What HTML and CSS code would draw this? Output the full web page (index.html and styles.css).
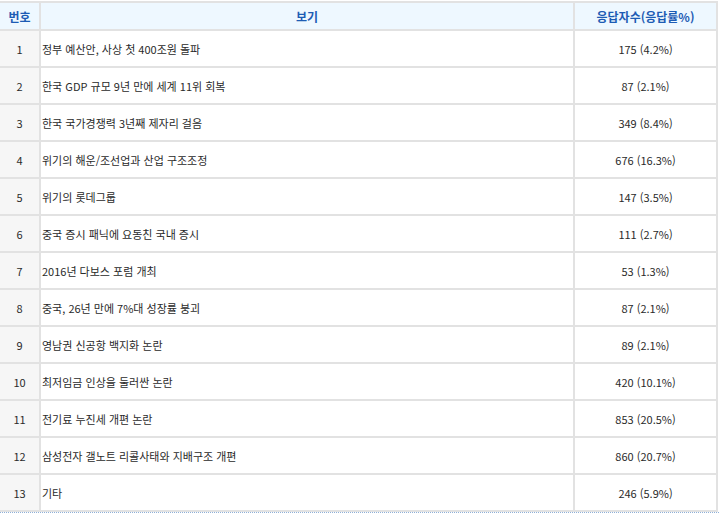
FILE: index.html
```html
<!DOCTYPE html>
<html lang="ko">
<head>
<meta charset="utf-8">
<link rel="stylesheet" href="styles.css">
</head>
<body>
<div class="wrap">
<table class="poll">
  <colgroup><col class="c-no"><col class="c-item"><col class="c-res"></colgroup>
  <thead>
    <tr><th>번호</th><th>보기</th><th>응답자수(응답률%)</th></tr>
  </thead>
  <tbody>
    <tr><td class="no">1</td><td class="item">정부 예산안, 사상 첫 400조원 돌파</td><td class="res">175 (4.2%)</td></tr>
    <tr><td class="no">2</td><td class="item">한국 GDP 규모 9년 만에 세계 11위 회복</td><td class="res">87 (2.1%)</td></tr>
    <tr><td class="no">3</td><td class="item">한국 국가경쟁력 3년째 제자리 걸음</td><td class="res">349 (8.4%)</td></tr>
    <tr><td class="no">4</td><td class="item">위기의 해운/조선업과 산업 구조조정</td><td class="res">676 (16.3%)</td></tr>
    <tr><td class="no">5</td><td class="item">위기의 롯데그룹</td><td class="res">147 (3.5%)</td></tr>
    <tr><td class="no">6</td><td class="item">중국 증시 패닉에 요동친 국내 증시</td><td class="res">111 (2.7%)</td></tr>
    <tr><td class="no">7</td><td class="item">2016년 다보스 포럼 개최</td><td class="res">53 (1.3%)</td></tr>
    <tr><td class="no">8</td><td class="item">중국, 26년 만에 7%대 성장률 붕괴</td><td class="res">87 (2.1%)</td></tr>
    <tr><td class="no">9</td><td class="item">영남권 신공항 백지화 논란</td><td class="res">89 (2.1%)</td></tr>
    <tr><td class="no">10</td><td class="item">최저임금 인상을 둘러싼 논란</td><td class="res">420 (10.1%)</td></tr>
    <tr><td class="no">11</td><td class="item">전기료 누진세 개편 논란</td><td class="res">853 (20.5%)</td></tr>
    <tr><td class="no">12</td><td class="item">삼성전자 갤노트 리콜사태와 지배구조 개편</td><td class="res">860 (20.7%)</td></tr>
    <tr><td class="no">13</td><td class="item">기타</td><td class="res">246 (5.9%)</td></tr>
  </tbody>
</table>
</div>
</body>
</html>
```

FILE: styles.css
```css
html, body {
  margin: 0;
  padding: 0;
  background: #ffffff;
}
.wrap {
  padding: 1px 3px 0 0;
  border-bottom: 1px dotted #8fb0d8;
  width: 718px;
}
.poll {
  border-collapse: collapse;
  width: 717px;
  table-layout: fixed;
  font-family: "Noto Sans CJK KR", "Noto Sans", sans-serif;
  font-size: 11px;
  color: #2a2a2a;
}
.c-no { width: 40px; }
.c-item { width: 534px; }
.c-res { width: 143px; }
.poll th, .poll td {
  border: 2px solid #e2e2e2;
  padding: 0;
}
.poll th {
  height: 26px;
  background: #eef8ff;
  color: #1d5cb4;
  font-weight: bold;
  font-size: 12px;
  text-align: center;
}
.poll td {
  height: 35px;
}
.poll td.no {
  background: #f6f6f6;
  text-align: center;
}
.poll td.item {
  text-align: left;
  padding-left: 1px;
}
.poll td.res {
  text-align: center;
}
.poll tr > :first-child { border-left: none; }
.poll thead th { border-top: 2px solid #e2e2e2; }
```
